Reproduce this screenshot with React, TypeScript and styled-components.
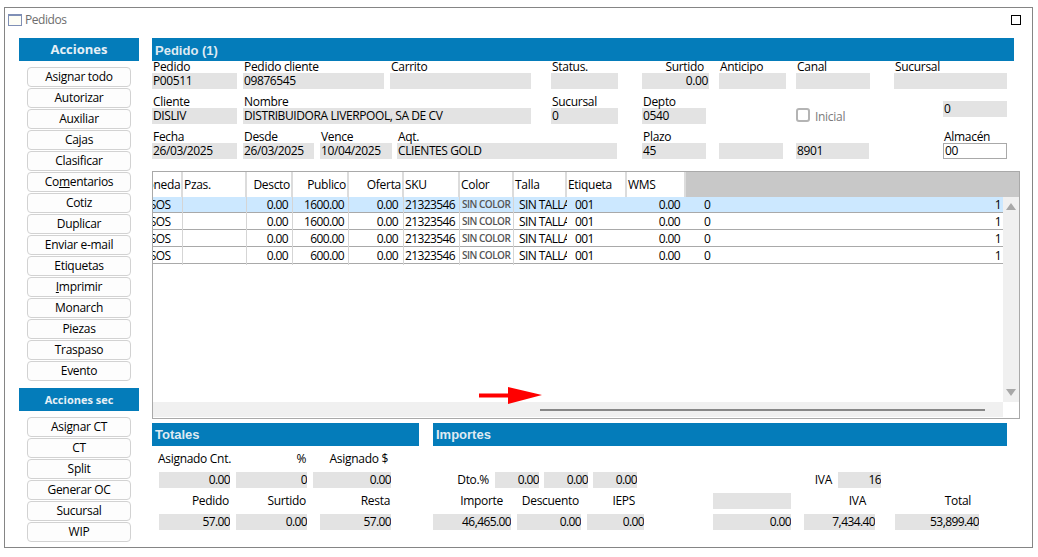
import React from "react";
import styled, { createGlobalStyle } from "styled-components";

const Global = createGlobalStyle`
  html, body { margin: 0; padding: 0; background: #fff; }
  body { font-family: "Open Sans", "Noto Sans", sans-serif; font-size: 12px; color: #000; letter-spacing: -0.3px; }
`;

const Win = styled.div`
  box-sizing: border-box;
  width: 1029px;
  height: 541px;
  margin: 7px 0 0 4px;
  border: 1px solid #858585;
  display: flex;
  flex-direction: column;
`;
const TitleBar = styled.div`
  height: 30px;
  flex: none;
  display: flex;
  align-items: flex-start;
  padding: 6px 11px 0 3px;
  box-sizing: border-box;
  gap: 3px;
`;
const TitleIcon = styled.span`
  box-sizing: border-box;
  width: 14px;
  height: 12px;
  border: 1px solid #7f8fb5;
  border-top-width: 2px;
  background: #fdfdf5;
`;
const TitleText = styled.span`
  color: #6d6d6d;
  font-size: 12px;
  line-height: 12px;
  letter-spacing: -0.45px;
`;
const MaxBox = styled.span`
  box-sizing: border-box;
  width: 10px;
  height: 10px;
  border: 1px solid #000;
  margin: 1px 0 0 auto;
`;
const Body = styled.div`
  display: flex;
  gap: 13px;
  padding-left: 14px;
`;
const Side = styled.div`
  width: 120px;
  flex: none;
  display: flex;
  flex-direction: column;
  align-items: center;
`;
const SideHead = styled.div<{ $size: number }>`
  width: 120px;
  height: 23px;
  background: #047cba;
  color: #e6f0f6;
  font-weight: 700;
  font-size: ${(p) => p.$size}px;
  letter-spacing: 0;
  line-height: 23px;
  text-align: center;
  margin-bottom: 6px;
`;
const BtnStack = styled.div`
  display: flex;
  flex-direction: column;
  gap: 1px;
  margin-bottom: 7px;
`;
const Btn = styled.div`
  box-sizing: border-box;
  width: 104px;
  height: 20px;
  border: 1px solid #d2d2d2;
  border-radius: 4px;
  background: #fdfdfd;
  font-size: 12px;
  line-height: 17px;
  text-align: center;
  u { text-underline-offset: 1px; }
`;
const Main = styled.div`
  width: 868px;
  flex: none;
  display: flex;
  flex-direction: column;
`;
const Head = styled.div<{ $w: number; $lh?: number }>`
  width: ${(p) => p.$w}px;
  flex: none;
  height: 23px;
  box-sizing: border-box;
  padding-left: 3px;
  background: #047cba;
  color: #dfeaf2;
  font-family: "Liberation Sans", Arial, sans-serif;
  font-weight: 700;
  font-size: 13px;
  letter-spacing: 0;
  line-height: ${(p) => p.$lh ?? 24}px;
`;
const FormRow = styled.div`
  display: flex;
  align-items: flex-end;
  margin-bottom: 7px;
`;
const Field = styled.div<{ $w: number; $ml?: number; $mb?: number }>`
  width: ${(p) => p.$w}px;
  margin-left: ${(p) => p.$ml ?? 0}px;
  margin-bottom: ${(p) => p.$mb ?? 0}px;
  flex: none;
`;
const Label = styled.div<{ $right?: boolean }>`
  height: 12px;
  line-height: 12px;
  font-size: 12px;
  white-space: nowrap;
  padding: ${(p) => (p.$right ? "0 5px 0 0" : "0 0 0 1px")};
  text-align: ${(p) => (p.$right ? "right" : "left")};
`;
const Value = styled.div<{ $right?: boolean }>`
  height: 16px;
  line-height: 16px;
  background: #e3e3e3;
  font-size: 12px;
  letter-spacing: -0.4px;
  padding: 0 1px;
  white-space: nowrap;
  overflow: hidden;
  text-align: ${(p) => (p.$right ? "right" : "left")};
`;
const InputBox = styled(Value)`
  box-sizing: border-box;
  background: #fff;
  border: 1px solid #a9a9a9;
  line-height: 14px;
`;
const CheckWrap = styled.div`
  width: 147px;
  height: 16px;
  margin-left: 90px;
  display: flex;
  align-items: flex-start;
  gap: 5px;
  color: #7b7b7b;
`;
const CheckBox = styled.span`
  box-sizing: border-box;
  width: 14px;
  height: 14px;
  flex: none;
  border: 2px solid #b4b4b4;
  border-radius: 3px;
`;
const CheckText = styled.span`
  line-height: 12px;
  margin-top: 3px;
`;

const GridBox = styled.div`
  box-sizing: border-box;
  width: 868px;
  height: 248px;
  margin-top: 5px;
  border: 1px solid #a9a9a9;
  display: flex;
  flex-direction: column;
`;
const columns = "30px 64px 46px 56px 55px 56px 54px 53px 60px 59px";
const HeaderRow = styled.div`
  flex: none;
  height: 25px;
  background: #c8c8c8;
  display: grid;
  grid-template-columns: ${columns};
`;
const HCell = styled.div<{ $right?: boolean }>`
  box-sizing: border-box;
  background: #fff;
  border-right: 2px solid #dcdcdc;
  overflow: hidden;
  white-space: nowrap;
  line-height: 26px;
  padding: 0 ${(p) => (p.$right ? 1 : 0)}px 0 ${(p) => (p.$right ? 0 : 1)}px;
  text-align: ${(p) => (p.$right ? "right" : "left")};
`;
const Scrolled = styled.span<{ $x: number }>`
  display: inline-block;
  margin-left: ${(p) => p.$x}px;
`;
const GridBody = styled.div`
  flex: 1;
  display: grid;
  grid-template-columns: 850px 16px;
  grid-template-rows: 205px 15px;
`;
const RowsArea = styled.div``;
const DataRow = styled.div<{ $sel?: boolean; $h: number }>`
  height: ${(p) => p.$h}px;
  box-sizing: border-box;
  display: grid;
  grid-template-columns: ${columns} 1fr;
  border-bottom: 1px solid #a9a9a9;
  background: ${(p) => (p.$sel ? "#cce8ff" : "#fff")};
  line-height: ${(p) => (p.$sel ? 16 : 18)}px;
  letter-spacing: -0.6px;
`;
const Cell = styled.div<{ $right?: number; $left?: number; $line?: boolean }>`
  box-sizing: border-box;
  overflow: hidden;
  white-space: nowrap;
  padding-right: ${(p) => p.$right ?? 0}px;
  padding-left: ${(p) => p.$left ?? 0}px;
  text-align: ${(p) => (p.$right !== undefined ? "right" : "left")};
  border-right: ${(p) => (p.$line ? "1px solid #d5d5d5" : "0")};
`;
const ColorTag = styled.span<{ $sel?: boolean }>`
  font-size: 10px;
  font-weight: 600;
  color: #555;
  line-height: ${(p) => (p.$sel ? 15 : 17)}px;
  display: block;
  letter-spacing: -0.5px;
`;
const LastCell = styled.div`
  display: flex;
  justify-content: space-between;
  padding: 0 2px 0 18px;
`;
const VScroll = styled.div`
  background: #f0f0f0;
  display: flex;
  flex-direction: column;
  justify-content: space-between;
  align-items: center;
  padding: 6px 0;
`;
const HScroll = styled.div`
  background: #f0f0f0;
  display: flex;
  align-items: center;
  padding-left: 387px;
`;
const Thumb = styled.div`
  width: 445px;
  height: 2px;
  background: #878787;
`;
const RedArrow = styled.svg`
  position: absolute;
  left: 479px;
  top: 387px;
`;
const Bottom = styled.div`
  display: flex;
  gap: 14px;
  margin-top: 4px;
`;
const Panel = styled.div<{ $w: number }>`
  width: ${(p) => p.$w}px;
  flex: none;
`;
const PanelBody = styled.div`
  padding-top: 5px;
`;
const SumRow = styled.div<{ $mt?: number }>`
  display: flex;
  align-items: flex-end;
  margin-top: ${(p) => p.$mt ?? 0}px;
`;
const LabelCell = styled.div<{ $w: number; $ml?: number; $align?: string }>`
  width: ${(p) => p.$w}px;
  margin-left: ${(p) => p.$ml ?? 0}px;
  flex: none;
  height: 16px;
  line-height: 16px;
  white-space: nowrap;
  text-align: ${(p) => p.$align ?? "right"};
`;
const Box = styled(Value)<{ $w: number; $ml?: number }>`
  width: ${(p) => p.$w}px;
  margin-left: ${(p) => p.$ml ?? 0}px;
  flex: none;
  box-sizing: border-box;
  text-align: right;
  padding: 0;
  letter-spacing: -0.6px;
`;

const side1: React.ReactNode[] = [
  "Asignar todo", "Autorizar", "Auxiliar", "Cajas", "Clasificar",
  <>Co<u>m</u>entarios</>, "Cotiz", "Duplicar", "Enviar e-mail", "Etiquetas",
  <><u>I</u>mprimir</>, "Monarch", "Piezas", "Traspaso", "Evento",
];
const side2 = ["Asignar CT", "CT", "Split", "Generar OC", "Sucursal", "WIP"];
const rows = [
  { p: "1600.00", h: 16, sel: true },
  { p: "1600.00", h: 17, sel: false },
  { p: "600.00", h: 17, sel: false },
  { p: "600.00", h: 17, sel: false },
];

export default function App() {
  return (
    <>
      <Global />
      <Win>
        <TitleBar>
          <TitleIcon />
          <TitleText>Pedidos</TitleText>
          <MaxBox />
        </TitleBar>
        <Body>
          <Side>
            <SideHead $size={13}>Acciones</SideHead>
            <BtnStack>{side1.map((b, i) => <Btn key={i}>{b}</Btn>)}</BtnStack>
            <SideHead $size={11}>Acciones sec</SideHead>
            <BtnStack>{side2.map((b) => <Btn key={b}>{b}</Btn>)}</BtnStack>
          </Side>
          <Main>
            <Head $w={862} $lh={26}>Pedido (1)</Head>
            <FormRow>
              <Field $w={85}><Label>Pedido</Label><Value>P00511</Value></Field>
              <Field $w={141} $ml={6}><Label>Pedido cliente</Label><Value>09876545</Value></Field>
              <Field $w={141} $ml={6}><Label>Carrito</Label><Value /></Field>
              <Field $w={67} $ml={20}><Label>Status.</Label><Value /></Field>
              <Field $w={67} $ml={24}><Label $right>Surtido</Label><Value $right>0.00</Value></Field>
              <Field $w={67} $ml={10}><Label>Anticipo</Label><Value /></Field>
              <Field $w={74} $ml={10}><Label>Canal</Label><Value /></Field>
              <Field $w={113} $ml={24}><Label>Sucursal</Label><Value /></Field>
            </FormRow>
            <FormRow>
              <Field $w={85}><Label>Cliente</Label><Value>DISLIV</Value></Field>
              <Field $w={288} $ml={6}><Label>Nombre</Label><Value>DISTRIBUIDORA LIVERPOOL, SA DE CV</Value></Field>
              <Field $w={67} $ml={20}><Label>Sucursal</Label><Value>0</Value></Field>
              <Field $w={64} $ml={24}><Label>Depto</Label><Value>0540</Value></Field>
              <CheckWrap><CheckBox /><CheckText>Inicial</CheckText></CheckWrap>
              <Field $w={64} $mb={7}><Value>0</Value></Field>
            </FormRow>
            <FormRow>
              <Field $w={85}><Label>Fecha</Label><Value>26/03/2025</Value></Field>
              <Field $w={71} $ml={6}><Label>Desde</Label><Value>26/03/2025</Value></Field>
              <Field $w={72} $ml={6}><Label>Vence</Label><Value>10/04/2025</Value></Field>
              <Field $w={220} $ml={5}><Label>Aqt.</Label><Value>CLIENTES GOLD</Value></Field>
              <Field $w={64} $ml={25}><Label>Plazo</Label><Value>45</Value></Field>
              <Field $w={64} $ml={13}><Value /></Field>
              <Field $w={73} $ml={13}><Value>8901</Value></Field>
              <Field $w={64} $ml={74}><Label>Almacén</Label><InputBox>00</InputBox></Field>
            </FormRow>
            <GridBox>
              <HeaderRow>
                <HCell><Scrolled $x={-18}>Moneda</Scrolled></HCell>
                <HCell>Pzas.</HCell>
                <HCell $right>Descto</HCell>
                <HCell $right>Publico</HCell>
                <HCell $right>Oferta</HCell>
                <HCell>SKU</HCell>
                <HCell>Color</HCell>
                <HCell>Talla</HCell>
                <HCell>Etiqueta</HCell>
                <HCell>WMS</HCell>
              </HeaderRow>
              <GridBody>
                <RowsArea>
                  {rows.map((r, i) => (
                    <DataRow key={i} $sel={r.sel} $h={r.h}>
                      <Cell $line><Scrolled $x={-16}>PESOS</Scrolled></Cell>
                      <Cell $line />
                      <Cell $line $right={4}>0.00</Cell>
                      <Cell $line $right={4}>{r.p}</Cell>
                      <Cell $line $right={5}>0.00</Cell>
                      <Cell $line $left={1}>21323546</Cell>
                      <Cell $line $left={2}><ColorTag $sel={r.sel}>SIN COLOR</ColorTag></Cell>
                      <Cell $left={5}>SIN TALLA</Cell>
                      <Cell $left={8}>001</Cell>
                      <Cell $right={6}>0.00</Cell>
                      <LastCell><span>0</span><span>1</span></LastCell>
                    </DataRow>
                  ))}
                </RowsArea>
                <VScroll>
                  <svg width="10" height="7" viewBox="0 0 10 7"><path d="M5 0L10 7H0Z" fill="#a8a8a8" /></svg>
                  <svg width="10" height="7" viewBox="0 0 10 7"><path d="M0 0H10L5 7Z" fill="#a8a8a8" /></svg>
                </VScroll>
                <HScroll><Thumb /></HScroll>
              </GridBody>
            </GridBox>
            <Bottom>
              <Panel $w={267}>
                <Head $w={267}>Totales</Head>
                <PanelBody>
                  <SumRow>
                    <LabelCell $w={80} $ml={6} $align="left">Asignado Cnt.</LabelCell>
                    <LabelCell $w={68}>%</LabelCell>
                    <LabelCell $w={82}>Asignado $</LabelCell>
                  </SumRow>
                  <SumRow $mt={5}>
                    <Box $w={71} $ml={7}>0.00</Box>
                    <Box $w={71} $ml={6}>0</Box>
                    <Box $w={78} $ml={6}>0.00</Box>
                  </SumRow>
                  <SumRow $mt={5}>
                    <LabelCell $w={70} $ml={7}>Pedido</LabelCell>
                    <LabelCell $w={77}>Surtido</LabelCell>
                    <LabelCell $w={84}>Resta</LabelCell>
                  </SumRow>
                  <SumRow $mt={5}>
                    <Box $w={71} $ml={7}>57.00</Box>
                    <Box $w={71} $ml={6}>0.00</Box>
                    <Box $w={71} $ml={13}>57.00</Box>
                  </SumRow>
                </PanelBody>
              </Panel>
              <Panel $w={574}>
                <Head $w={574}>Importes</Head>
                <PanelBody>
                  <SumRow $mt={21}>
                    <LabelCell $w={56}>Dto.%</LabelCell>
                    <Box $w={44} $ml={6}>0.00</Box>
                    <Box $w={44} $ml={5}>0.00</Box>
                    <Box $w={44} $ml={5}>0.00</Box>
                    <LabelCell $w={195}>IVA</LabelCell>
                    <Box $w={43} $ml={6}>16</Box>
                  </SumRow>
                  <SumRow $mt={5}>
                    <LabelCell $w={70}>Importe</LabelCell>
                    <LabelCell $w={76}>Descuento</LabelCell>
                    <LabelCell $w={56}>IEPS</LabelCell>
                    <Box $w={78} $ml={78} />
                    <LabelCell $w={75}>IVA</LabelCell>
                    <LabelCell $w={105}>Total</LabelCell>
                  </SumRow>
                  <SumRow $mt={5}>
                    <Box $w={78}>46,465.00</Box>
                    <Box $w={64} $ml={6}>0.00</Box>
                    <Box $w={57} $ml={6}>0.00</Box>
                    <Box $w={78} $ml={69}>0.00</Box>
                    <Box $w={71} $ml={13}>7,434.40</Box>
                    <Box $w={84} $ml={20}>53,899.40</Box>
                  </SumRow>
                </PanelBody>
              </Panel>
            </Bottom>
          </Main>
        </Body>
      </Win>
      <RedArrow width="63" height="17" viewBox="0 0 63 17">
        <path d="M0 6.5H29L29 0L63 8L29 17V10.5H0Z" fill="#f00" />
      </RedArrow>
    </>
  );
}
